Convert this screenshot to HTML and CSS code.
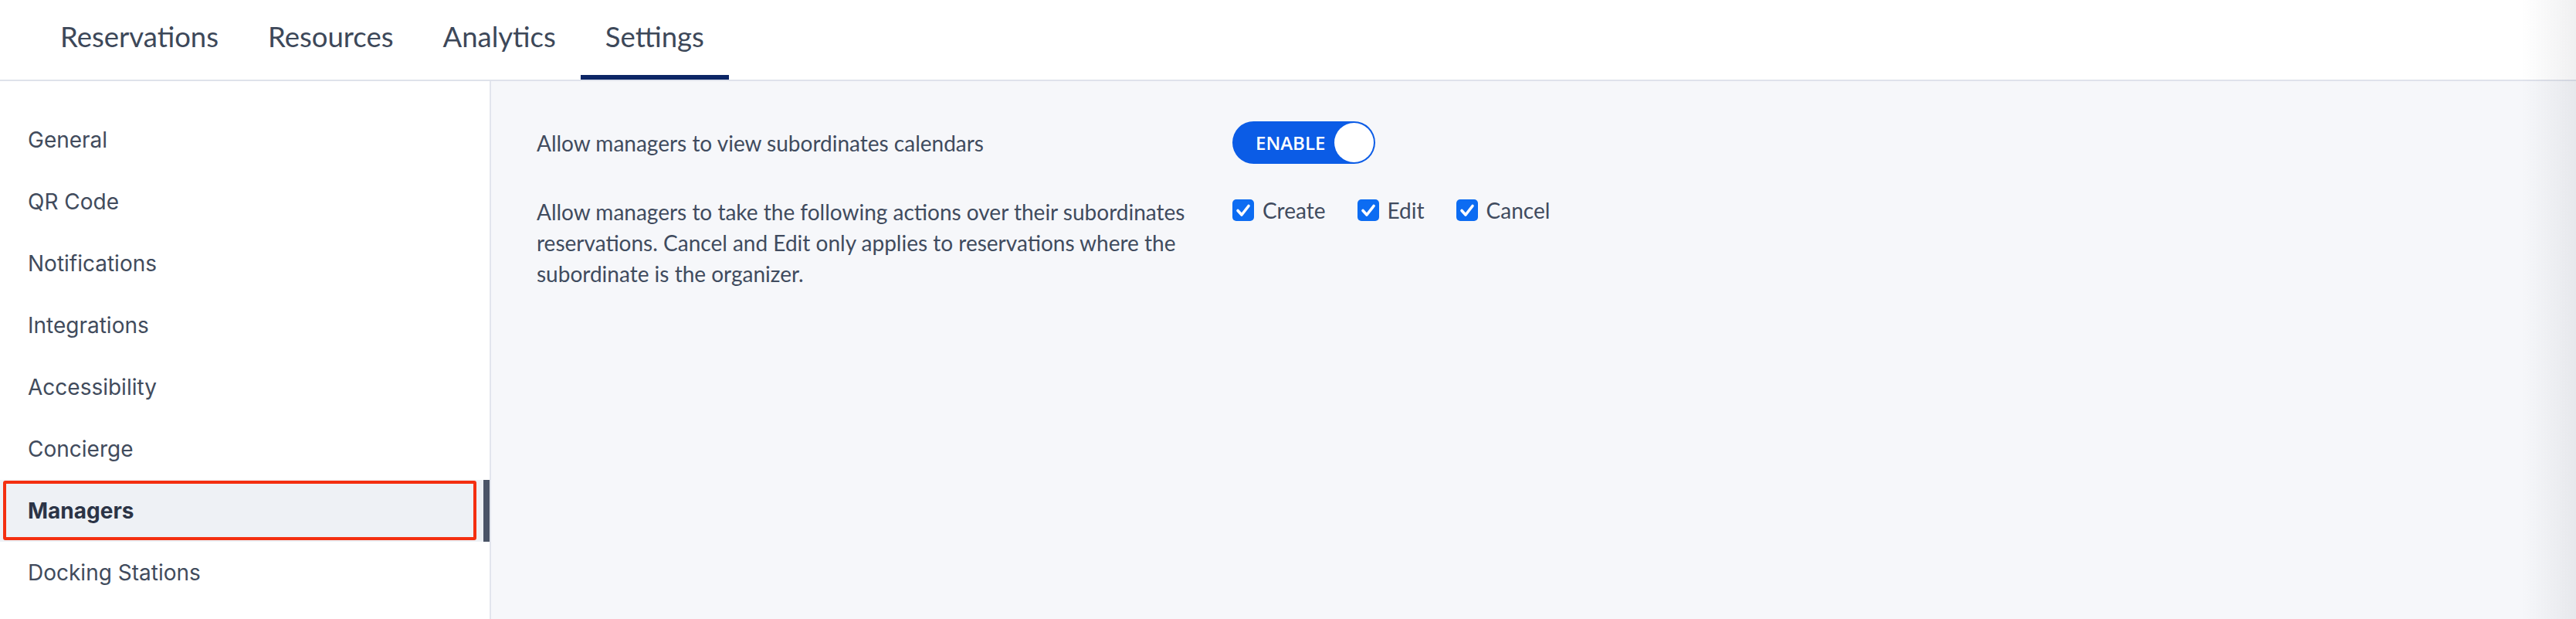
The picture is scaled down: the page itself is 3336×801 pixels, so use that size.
FILE: index.html
```html
<!DOCTYPE html>
<html lang="en">
<head>
<meta charset="utf-8">
<title>Settings - Managers</title>
<link rel="stylesheet" href="styles.css">
</head>
<body>
<header class="topnav">
  <nav class="tabs">
    <a class="tab">Reservations</a>
    <a class="tab">Resources</a>
    <a class="tab">Analytics</a>
    <a class="tab tab-active">Settings</a>
  </nav>
</header>
<div class="layout">
  <aside class="sidebar">
    <ul class="menu">
      <li class="menu-item">General</li>
      <li class="menu-item">QR Code</li>
      <li class="menu-item">Notifications</li>
      <li class="menu-item">Integrations</li>
      <li class="menu-item">Accessibility</li>
      <li class="menu-item">Concierge</li>
      <li class="menu-item menu-item-active">Managers<span class="annotation"></span></li>
      <li class="menu-item">Docking Stations</li>
    </ul>
  </aside>
  <main class="content">
    <div class="setting setting-toggle">
      <div class="setting-label">Allow managers to view subordinates calendars</div>
      <div class="toggle">
        <span class="toggle-text">ENABLE</span>
        <span class="toggle-knob"></span>
      </div>
    </div>
    <div class="setting setting-checks">
      <div class="setting-label">Allow managers to take the following actions over their subordinates reservations. Cancel and Edit only applies to reservations where the subordinate is the organizer.</div>
      <div class="options">
        <label class="option"><span class="checkbox"><svg viewBox="0 0 28 28" width="28" height="28"><path d="M7 14.5 L12 20 L21 8.5" fill="none" stroke="#fff" stroke-width="3.6" stroke-linecap="round" stroke-linejoin="round"/></svg></span><span class="option-text">Create</span></label>
        <label class="option"><span class="checkbox"><svg viewBox="0 0 28 28" width="28" height="28"><path d="M7 14.5 L12 20 L21 8.5" fill="none" stroke="#fff" stroke-width="3.6" stroke-linecap="round" stroke-linejoin="round"/></svg></span><span class="option-text">Edit</span></label>
        <label class="option"><span class="checkbox"><svg viewBox="0 0 28 28" width="28" height="28"><path d="M7 14.5 L12 20 L21 8.5" fill="none" stroke="#fff" stroke-width="3.6" stroke-linecap="round" stroke-linejoin="round"/></svg></span><span class="option-text">Cancel</span></label>
      </div>
    </div>
  </main>
</div>
<div class="edge-shade"></div>
</body>
</html>
```
FILE: styles.css
```css
* { box-sizing: border-box; }
html, body { margin: 0; padding: 0; height: 100%; }
body {
  background: #f6f7fa;
  font-family: "Lato", "Liberation Sans", sans-serif;
  color: #3f4a5c;
  overflow: hidden;
}

.topnav {
  height: 105px;
  background: #ffffff;
  border-bottom: 2px solid #dfe2eb;
}
.tabs {
  display: flex;
  height: 103px;
  padding-left: 46px;
}
.tab {
  display: flex;
  align-items: center;
  padding: 0 32px 4px;
  font-size: 36.5px;
  color: #3d4859;
  border-bottom: 6px solid transparent;
}
.tab-active {
  border-bottom-color: #0c2666;
}

.layout {
  display: flex;
  height: calc(100% - 105px);
}
.sidebar {
  width: 636px;
  flex: none;
  background: #ffffff;
  border-right: 2px solid #e2e5ed;
  padding-top: 36px;
}
.menu {
  list-style: none;
  margin: 0;
  padding: 0;
}
.menu-item {
  position: relative;
  height: 80px;
  display: flex;
  align-items: center;
  padding-left: 36px;
  font-family: "Inter", "Liberation Sans", sans-serif;
  font-size: 28px;
  color: #414b5c;
}
.menu-item-active {
  background: #eef1f5;
  font-weight: 700;
  color: #2b3446;
  box-shadow: inset -8px 0 0 #4a5467;
}
.annotation {
  position: absolute;
  left: 4px;
  top: 1px;
  right: 17px;
  bottom: 2px;
  border: 4px solid #f42f10;
  border-radius: 3px;
}

.content {
  flex: 1;
  padding: 52px 0 0 59px;
}
.setting {
  display: flex;
}
.setting-label {
  width: 901px;
  flex: none;
  padding-right: 40px;
  font-size: 28px;
  line-height: 40px;
  color: #404b5e;
}
.setting-toggle {
  align-items: center;
  margin-bottom: 42px;
}
.setting-checks {
  align-items: flex-start;
}

.toggle {
  width: 185px;
  height: 55px;
  border-radius: 28px;
  background: #0b5ce6;
  display: flex;
  align-items: center;
  justify-content: space-between;
  padding: 0 2px 0 30px;
}
.toggle-text {
  font-family: "Open Sans", "Liberation Sans", sans-serif;
  font-weight: 600;
  font-size: 24px;
  color: #ffffff;
}
.toggle-knob {
  width: 51px;
  height: 51px;
  border-radius: 50%;
  background: #ffffff;
}

.options {
  display: flex;
  gap: 41px;
}
.option {
  display: flex;
  align-items: center;
  gap: 11px;
  height: 36px;
}
.checkbox {
  width: 28px;
  height: 28px;
  border-radius: 5px;
  background: #0c6cf2;
  display: flex;
}
.option-text {
  font-size: 28px;
  color: #404b5e;
}

.edge-shade {
  position: fixed;
  top: 0;
  right: 0;
  width: 70px;
  height: 100%;
  background: linear-gradient(to right, rgba(40, 44, 60, 0), rgba(40, 44, 60, 0.07));
  pointer-events: none;
}
```
